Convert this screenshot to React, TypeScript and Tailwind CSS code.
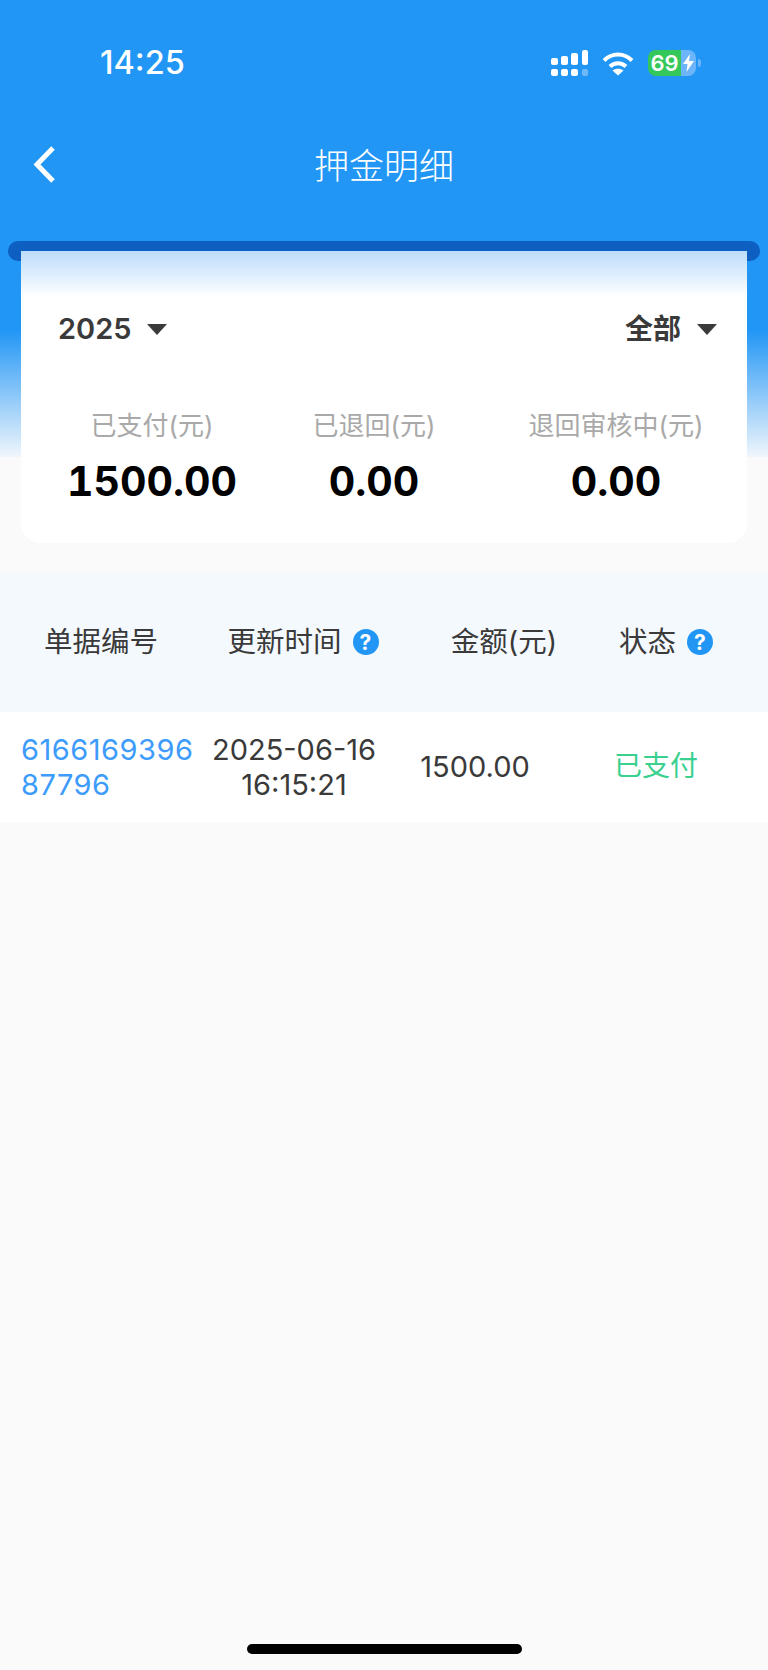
const font = "font-['Inter','Noto_Sans_CJK_SC',sans-serif]";

function Caret() {
  return (
    <svg width="20" height="11" viewBox="0 0 20 11" className="shrink-0">
      <polygon points="0,0 20,0 10,11" fill="#3a3a3a" />
    </svg>
  );
}

function Help() {
  return (
    <span className="flex h-[26px] w-[26px] shrink-0 items-center justify-center rounded-full bg-[#2196f5] text-[21px] leading-none font-bold text-white">
      ?
    </span>
  );
}

function Signal() {
  return (
    <svg width="37" height="26" viewBox="0 0 37 26" fill="#fff">
      <rect x="0" y="8" width="7" height="7" rx="2" />
      <rect x="10" y="6" width="7" height="9" rx="2" />
      <rect x="20" y="3" width="7" height="12" rx="2" />
      <rect x="31" y="0" width="6" height="15" rx="2" />
      <rect x="0" y="19" width="7" height="7" rx="2" />
      <rect x="10" y="19" width="7" height="7" rx="2" />
      <rect x="20" y="19" width="7" height="7" rx="2" />
      <rect x="31" y="19" width="6" height="7" rx="2" opacity="0.35" />
    </svg>
  );
}

function Wifi() {
  return (
    <svg width="32" height="25" viewBox="0 0 32 25" fill="none" stroke="#fff" strokeWidth="4">
      <path d="M2 9.5C10 1.5 22 1.5 30 9.5" />
      <path d="M8 15.5C12.5 11 19.5 11 24 15.5" />
      <path d="M16 24.5L10.5 19.5C13.5 17 18.5 17 21.5 19.5Z" fill="#fff" stroke="none" />
    </svg>
  );
}

function Battery() {
  return (
    <div className="flex items-center">
      <div className="flex h-[26px] w-[48px] overflow-hidden rounded-[8px]">
        <div className="flex w-[33px] items-center justify-center bg-[#34c759] text-[22px] leading-none font-semibold text-white">
          69
        </div>
        <div className="flex flex-1 items-center justify-center bg-[#6db5fb]">
          <svg width="11" height="18" viewBox="0 0 11 18" fill="#fff">
            <polygon points="7,0 0,10 4.5,10 3.5,18 11,7 6,7" />
          </svg>
        </div>
      </div>
      <div className="ml-[2px] h-[8px] w-[3px] rounded-r-full bg-[#6db5fb]" />
    </div>
  );
}

function Stat({ label, value, className = "" }: { label: string; value: string; className?: string }) {
  return (
    <div className={`flex flex-col items-center ${className}`}>
      <div className="text-[26px] leading-[34px] text-[#a9a9a9]">{label}</div>
      <div className="mt-[14px] text-[41px] leading-[48px] font-bold text-black tabular-nums">{value}</div>
    </div>
  );
}

export default function App() {
  return (
    <div
      className={`${font} flex h-[1670px] w-[768px] flex-col overflow-hidden bg-[linear-gradient(#2196f5_0,#2196f5_330px,#f0f6fc_457px,#fafafa_457px)]`}
    >
      {/* status bar */}
      <div className="mt-[43px] flex h-[40px] items-center justify-between pr-[67px] pl-[100px] text-white">
        <div className="text-[32.5px] leading-[40px] font-medium">14:25</div>
        <div className="flex items-center gap-[14px]">
          <Signal />
          <Wifi />
          <Battery />
        </div>
      </div>

      {/* nav */}
      <div className="relative mt-[22px] flex h-[120px] items-center justify-center">
        <svg width="26" height="42" viewBox="0 0 26 42" fill="none" stroke="#fff" strokeWidth="5" className="absolute left-[32px] top-[39px]">
          <polyline points="21,4 5,20.5 21,37" />
        </svg>
        <div className="mt-[2px] text-[35px] leading-none font-light text-white">押金明细</div>
      </div>

      {/* summary card */}
      <div className="mx-[8px] mt-[16px] h-[20px] rounded-full bg-[#0d5fc2]" />
      <div className="relative mx-[21px] -mt-[10px] h-[292px] rounded-b-[20px] bg-[linear-gradient(#bcdcfb,#fff_46px)] pt-[58px]">
        <div className="flex h-[40px] items-center justify-between pr-[30px] pl-[37px] text-[28px] font-semibold text-[#3a3a3a]">
          <div className="flex items-center gap-[15px] text-[29px]">
            2025
            <Caret />
          </div>
          <div className="flex items-center gap-[16px]">
            全部
            <Caret />
          </div>
        </div>
        <div className="mt-[60px] grid grid-cols-[262px_182px_282px]">
          <Stat label="已支付(元)" value="1500.00" />
          <Stat label="已退回(元)" value="0.00" />
          <Stat label="退回审核中(元)" value="0.00" className="ml-[20px] w-[262px]" />
        </div>
      </div>

      {/* table */}
      <div className="mt-[29px] grid h-[140px] grid-cols-[202px_202px_200px_124px] items-center bg-[#f4f9fe] text-[28.5px] text-[#3a3a3a]">
        <div className="text-center">单据编号</div>
        <div className="flex items-center justify-center gap-[11px]">
          更新时间
          <Help />
        </div>
        <div className="text-center">金额(元)</div>
        <div className="flex items-center justify-center gap-[11px]">
          状态
          <Help />
        </div>
      </div>
      <div className="grid h-[110px] grid-cols-[182px_182px_180px_182px] items-center bg-white pb-[1px] pl-[21px] text-[29px] leading-[35px] text-[#3a3a3a]">
        <div className="w-[178px] break-all tracking-[0.5px] text-[#3d9bfb]">616616939687796</div>
        <div className="text-center">
          2025-06-16
          <br />
          16:15:21
        </div>
        <div className="text-center">1500.00</div>
        <div className="text-center text-[28px] text-[#3ad08f]">已支付</div>
      </div>

      {/* home indicator */}
      <div className="mt-auto mb-[16px] ml-[247px] h-[10px] w-[275px] rounded-full bg-black" />
    </div>
  );
}
